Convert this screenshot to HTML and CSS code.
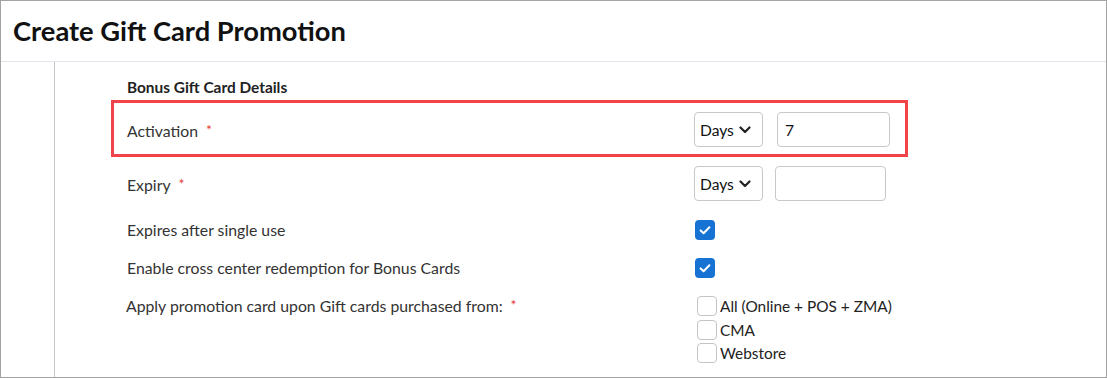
FILE: index.html
```html
<!DOCTYPE html>
<html lang="en">
<head>
<meta charset="utf-8">
<title>Create Gift Card Promotion</title>
<link rel="stylesheet" href="styles.css">
</head>
<body>
<div class="frame">
  <header class="header">
    <h1 class="title">Create Gift Card Promotion</h1>
  </header>
  <div class="body">
    <div class="gutter"></div>
    <main class="content">
      <h2 class="section-title">Bonus Gift Card Details</h2>

      <div class="row row--highlight">
        <div class="label">Activation<span class="req">*</span></div>
        <div class="controls">
          <div class="select"><span>Days</span><svg class="chev" viewBox="0 0 12 8" width="12" height="8"><path d="M1.5 1.5 L6 6 L10.5 1.5" fill="none" stroke="#222" stroke-width="2.2" stroke-linecap="round" stroke-linejoin="round"/></svg></div>
          <div class="input input--wide">7</div>
        </div>
      </div>

      <div class="row row--expiry">
        <div class="label">Expiry<span class="req">*</span></div>
        <div class="controls">
          <div class="select"><span>Days</span><svg class="chev" viewBox="0 0 12 8" width="12" height="8"><path d="M1.5 1.5 L6 6 L10.5 1.5" fill="none" stroke="#222" stroke-width="2.2" stroke-linecap="round" stroke-linejoin="round"/></svg></div>
          <div class="input"></div>
        </div>
      </div>

      <div class="row row--check row--first-check">
        <div class="label">Expires after single use</div>
        <div class="controls">
          <span class="cb cb--on"><svg viewBox="0 0 20 20" width="20" height="20"><path d="M5.6 10.4 L8.6 13.2 L14.4 7.2" fill="none" stroke="#fff" stroke-width="2" stroke-linecap="round" stroke-linejoin="round"/></svg></span>
        </div>
      </div>

      <div class="row row--check">
        <div class="label">Enable cross center redemption for Bonus Cards</div>
        <div class="controls">
          <span class="cb cb--on"><svg viewBox="0 0 20 20" width="20" height="20"><path d="M5.6 10.4 L8.6 13.2 L14.4 7.2" fill="none" stroke="#fff" stroke-width="2" stroke-linecap="round" stroke-linejoin="round"/></svg></span>
        </div>
      </div>

      <div class="row row--apply">
        <div class="label label--apply">Apply promotion card upon Gift cards purchased from:<span class="req">*</span></div>
        <div class="controls controls--list">
          <label class="opt"><span class="cb cb--off"></span>All (Online + POS + ZMA)</label>
          <label class="opt"><span class="cb cb--off"></span>CMA</label>
          <label class="opt"><span class="cb cb--off"></span>Webstore</label>
        </div>
      </div>
    </main>
  </div>
</div>
</body>
</html>
```

FILE: styles.css
```css
* { box-sizing: border-box; }

html, body {
  margin: 0;
  padding: 0;
  background: #fff;
}

body {
  font-family: Lato, "Open Sans", "Liberation Sans", sans-serif;
  color: #333;
}

.frame {
  width: 1107px;
  height: 378px;
  border: 1px solid #a3a3a3;
  overflow: hidden;
  display: flex;
  flex-direction: column;
}

.header {
  height: 61px;
  flex: none;
  border-bottom: 1px solid #e4e2ea;
  display: flex;
  align-items: center;
  padding-left: 12px;
}

.title {
  margin: 0;
  font-size: 27.3px;
  font-weight: 700;
  color: #111;
  letter-spacing: 0;
  padding-bottom: 2px;
}

.body {
  flex: 1;
  display: flex;
}

.gutter {
  width: 54px;
  flex: none;
  border-right: 1px solid #c6c6c6;
}

.content {
  flex: 1;
  padding: 16px 0 0 56px;
}

.section-title {
  margin: 0 0 4px 16px;
  font-size: 15.4px;
  line-height: 18px;
  font-weight: 700;
  color: #222;
}

.row {
  display: flex;
  align-items: center;
  width: 797px;
  padding-left: 16px;
}

.row--highlight {
  height: 57px;
  border: 3px solid #f2434a;
  padding-left: 13px;
  padding-top: 2px;
}

.row--expiry {
  margin-top: 9px;
  height: 35px;
}

.row--check {
  height: 20px;
  margin-top: 18px;
}

.row--first-check {
  margin-top: 19px;
}

.row--apply {
  margin-top: 18px;
  align-items: flex-start;
}

.label {
  width: 567px;
  flex: none;
  font-size: 15.8px;
  color: #333;
  padding-top: 2px;
}

.row--check .label {
  padding-top: 0;
  padding-bottom: 2px;
}

.label--apply {
  margin-left: -1px;
  width: 568px;
  line-height: 20px;
  padding-top: 0;
}

.req {
  color: #e53935;
  margin-left: 8px;
  font-size: 14px;
  position: relative;
  top: -2px;
}

.controls {
  display: flex;
  align-items: center;
  gap: 12px;
}

.row--highlight .controls {
  gap: 14px;
}

.select {
  width: 69px;
  height: 35px;
  border: 1px solid #c8c8c8;
  border-radius: 4px;
  display: flex;
  align-items: center;
  justify-content: space-between;
  padding: 0 11px 0 5px;
  font-size: 15.6px;
  color: #111;
}

.chev {
  display: block;
}

.input {
  width: 111px;
  height: 35px;
  border: 1px solid #c8c8c8;
  border-radius: 4px;
  display: flex;
  align-items: center;
  padding-left: 7px;
  font-size: 15.6px;
  color: #111;
}

.input--wide {
  width: 113px;
}

.cb {
  width: 20px;
  height: 20px;
  border-radius: 4px;
  display: inline-block;
  flex: none;
}

.cb svg { display: block; }

.cb--on {
  background: #1673d4;
  margin-left: 1px;
}

.cb--off {
  border: 1px solid #c4c4c4;
  background: #fff;
}

.controls--list {
  flex-direction: column;
  align-items: flex-start;
  gap: 3px;
  margin-left: 3px;
}

.opt {
  display: flex;
  align-items: center;
  gap: 3px;
  font-size: 15.4px;
  line-height: 20.5px;
  color: #222;
}
```
